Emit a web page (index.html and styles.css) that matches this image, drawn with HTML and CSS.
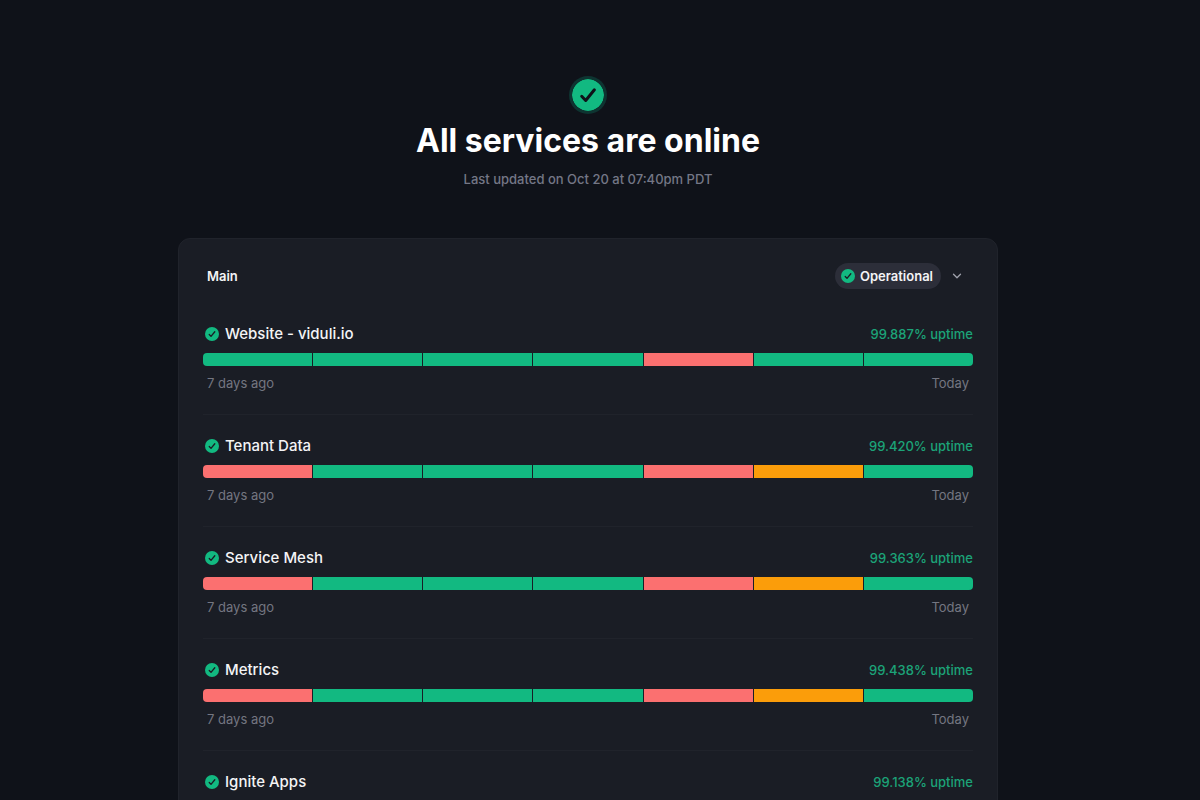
FILE: index.html
```html
<!DOCTYPE html>
<html lang="en">
<head>
  <meta charset="UTF-8">
  <title>Service Status</title>
  <meta name="viewport" content="width=device-width, initial-scale=1.0">
  <link rel="stylesheet" href="styles.css">
</head>
<body>

  <svg class="sprite" aria-hidden="true">
    <symbol id="check" viewBox="0 0 32 32">
      <circle cx="16" cy="16" r="16" fill="#12b981"/>
      <path d="M9.7 17.3l4 4.2 8.700-10.700" fill="none" stroke="currentColor" stroke-width="3" stroke-linecap="round" stroke-linejoin="round"/>
    </symbol>
  </svg>

  <header class="hero">
    <svg class="hero-icon"><use href="#check"/></svg>
    <h1>All services are online</h1>
    <p class="updated">Last updated on Oct 20 at 07:40pm PDT</p>
  </header>

  <main class="card">
    <div class="card-header">
      <h2>Main</h2>
      <div class="status">
        <span class="badge"><svg class="icon"><use href="#check"/></svg>Operational</span>
        <button class="toggle" type="button" aria-label="Collapse Main">
          <svg width="10" height="10" viewBox="0 0 10 10"><path d="M1.500 3.200L5 6.700l3.500-3.500" fill="none" stroke="currentColor" stroke-width="1.300" stroke-linecap="round" stroke-linejoin="round"/></svg>
        </button>
      </div>
    </div>

    <section class="service">
      <div class="service-head">
        <h3><svg class="icon"><use href="#check"/></svg>Website - viduli.io</h3>
        <span class="uptime">99.887% uptime</span>
      </div>
      <div class="bar">
        <span class="day"></span><span class="day"></span><span class="day"></span><span class="day"></span><span class="day down"></span><span class="day"></span><span class="day"></span>
      </div>
      <div class="range"><span>7 days ago</span><span>Today</span></div>
    </section>

    <section class="service">
      <div class="service-head">
        <h3><svg class="icon"><use href="#check"/></svg>Tenant Data</h3>
        <span class="uptime">99.420% uptime</span>
      </div>
      <div class="bar">
        <span class="day down"></span><span class="day"></span><span class="day"></span><span class="day"></span><span class="day down"></span><span class="day degraded"></span><span class="day"></span>
      </div>
      <div class="range"><span>7 days ago</span><span>Today</span></div>
    </section>

    <section class="service">
      <div class="service-head">
        <h3><svg class="icon"><use href="#check"/></svg>Service Mesh</h3>
        <span class="uptime">99.363% uptime</span>
      </div>
      <div class="bar">
        <span class="day down"></span><span class="day"></span><span class="day"></span><span class="day"></span><span class="day down"></span><span class="day degraded"></span><span class="day"></span>
      </div>
      <div class="range"><span>7 days ago</span><span>Today</span></div>
    </section>

    <section class="service">
      <div class="service-head">
        <h3><svg class="icon"><use href="#check"/></svg>Metrics</h3>
        <span class="uptime">99.438% uptime</span>
      </div>
      <div class="bar">
        <span class="day down"></span><span class="day"></span><span class="day"></span><span class="day"></span><span class="day down"></span><span class="day degraded"></span><span class="day"></span>
      </div>
      <div class="range"><span>7 days ago</span><span>Today</span></div>
    </section>

    <section class="service">
      <div class="service-head">
        <h3><svg class="icon"><use href="#check"/></svg>Ignite Apps</h3>
        <span class="uptime">99.138% uptime</span>
      </div>
    </section>
  </main>

</body>
</html>
```
FILE: styles.css
```css
* { box-sizing: border-box; }

body {
  margin: 0;
  padding: 79px 24px 0 0;
  background-color: #0f1219;
  color: #f4f4f6;
  font-family: Inter, sans-serif;
  font-size: 13px;
  font-weight: 500;
}

h1, h2, h3, p { margin: 0; }

.sprite {
  position: absolute;
  width: 0;
  height: 0;
}

.hero {
  display: flex;
  flex-direction: column;
  align-items: center;
  margin-bottom: 50px;
}

.hero-icon {
  width: 32px;
  height: 32px;
  border-radius: 50%;
  box-shadow: 0 0 0 3px #0e3431;
  color: #0f1219;
}

h1 {
  margin-top: 10px;
  color: #fff;
  font-size: 32px;
  line-height: 40px;
  font-weight: 700;
}

.updated {
  margin-top: 9px;
  color: #747786;
  line-height: 18px;
}

.card {
  max-width: 820px;
  margin: 0 auto;
  padding: 24px;
  background-color: #1a1d25;
  border: 1px solid #20232b;
  border-radius: 12px;
}

.card-header {
  display: flex;
  justify-content: space-between;
  align-items: center;
  margin-bottom: 14px;
  padding: 0 8px 0 4px;
}

h2 {
  font-size: 13px;
  font-weight: 600;
}

.status {
  display: flex;
  align-items: center;
  gap: 8px;
}

.badge {
  display: flex;
  align-items: center;
  gap: 5px;
  height: 26px;
  padding: 0 8px 0 6px;
  border-radius: 13px;
  background-color: #2c2e39;
  font-weight: 600;
}

.icon {
  width: 14px;
  height: 14px;
  color: #1a1d25;
}

.toggle {
  display: flex;
  padding: 3px;
  border: none;
  background: none;
  color: #a0a2ad;
  cursor: pointer;
}

.service {
  padding: 20px 0 22px;
  border-bottom: 1px solid #20232b;
}

.service:last-child { border-bottom: none; }

.service-head {
  display: flex;
  justify-content: space-between;
  align-items: center;
  margin-bottom: 8px;
  padding-left: 2px;
  line-height: 22px;
}

h3 {
  display: flex;
  align-items: center;
  gap: 6px;
  font-size: 15px;
  font-weight: 500;
}

.uptime { color: #1ca378; }

.bar {
  display: flex;
  gap: 1px;
  height: 13px;
  border-radius: 4px;
  overflow: hidden;
}

.day {
  flex: 1;
  background-color: #12b981;
}

.day.down { background-color: #fb7070; }

.day.degraded { background-color: #fb9d0a; }

.range {
  display: flex;
  justify-content: space-between;
  margin-top: 8px;
  padding: 0 4px;
  color: #747681;
  line-height: 18px;
  font-weight: 400;
}
```
